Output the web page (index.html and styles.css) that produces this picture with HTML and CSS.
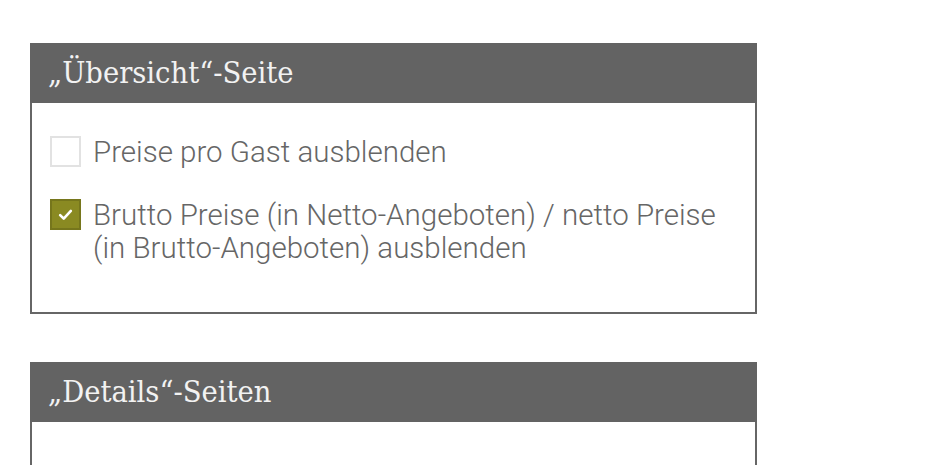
FILE: index.html
```html
<!DOCTYPE html>
<html lang="de">
<head>
  <meta charset="UTF-8" />
  <title>Einstellungen</title>
  <link rel="stylesheet" href="styles.css">
</head>
<body>
  <div class="settings">
    <section class="panel">
      <h2 class="panel-title">„Übersicht“-Seite</h2>
      <div class="panel-body">
        <label class="option">
          <span class="check"></span>
          <span class="option-text">Preise pro Gast ausblenden</span>
        </label>
        <label class="option">
          <span class="check checked">
            <svg viewBox="0 0 16 16" width="19" height="19"><path d="M3.5 8.5l3 3 6-6.5" fill="none" stroke="#fff" stroke-width="2.2" stroke-linecap="round" stroke-linejoin="round"/></svg>
          </span>
          <span class="option-text">Brutto Preise (in Netto-Angeboten) / netto Preise (in Brutto-Angeboten) ausblenden</span>
        </label>
      </div>
    </section>

    <section class="panel">
      <h2 class="panel-title">„Details“-Seiten</h2>
      <div class="panel-body"></div>
    </section>
  </div>
</body>
</html>
```

FILE: styles.css
```css
body {
  margin: 0;
  background: #fff;
  font-family: Roboto, "Liberation Sans", sans-serif;
}

.settings {
  padding: 43px 0 0 30px;
  display: flex;
  flex-direction: column;
  gap: 48px;
}

.panel {
  width: 727px;
  box-sizing: border-box;
  border: 2px solid #666;
  border-top: none;
}

.panel-title {
  margin: 0 -2px;
  height: 60px;
  padding: 0 18px;
  background: #636363;
  color: #f2f2f2;
  font-family: "DejaVu Serif", serif;
  font-stretch: condensed;
  font-weight: normal;
  font-size: 30.5px;
  line-height: 60px;
}

.panel-body {
  padding: 33px 20px 47px 18px;
  display: flex;
  flex-direction: column;
  gap: 30px;
  min-height: 60px;
}

.option {
  display: flex;
  align-items: flex-start;
  gap: 12px;
  color: #666;
  font-weight: 300;
  font-size: 29.5px;
  line-height: 33px;
}

.check {
  flex: none;
  width: 31px;
  height: 31px;
  box-sizing: border-box;
  border: 2px solid #e2e2e2;
  display: flex;
  align-items: center;
  justify-content: center;
}

.check.checked {
  background: #8a8a22;
  border-color: #76761c;
}
```
